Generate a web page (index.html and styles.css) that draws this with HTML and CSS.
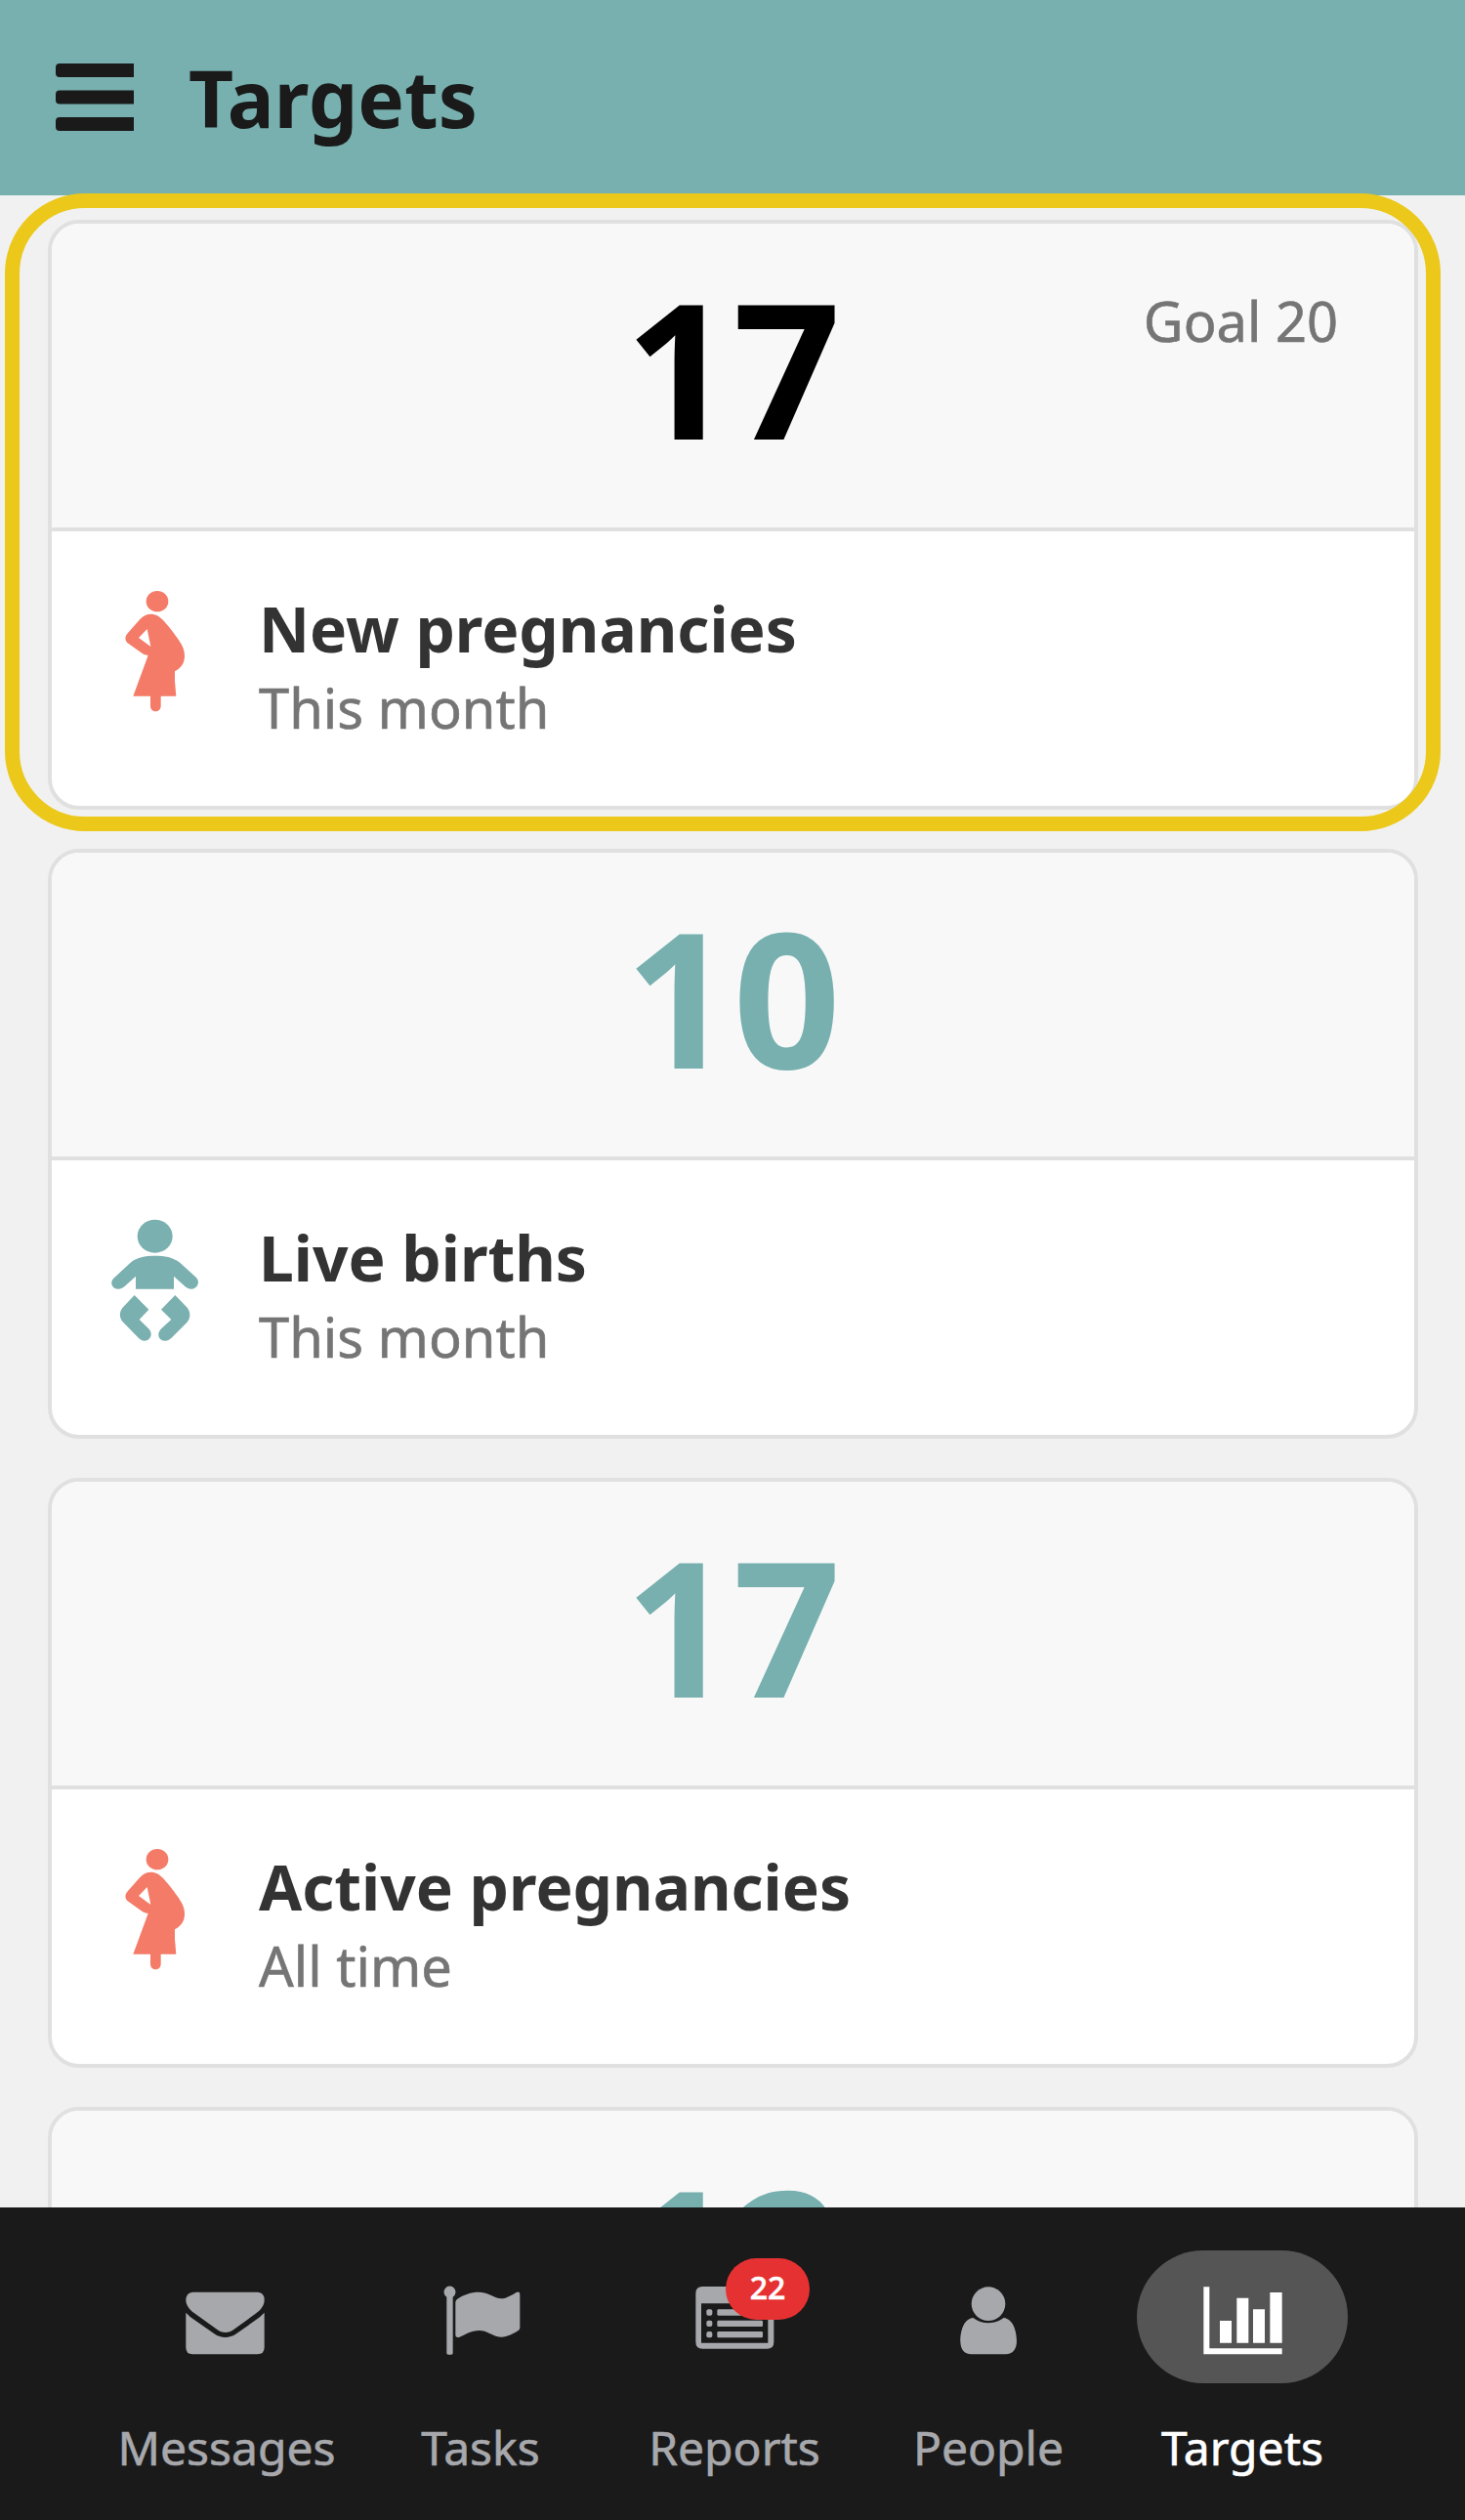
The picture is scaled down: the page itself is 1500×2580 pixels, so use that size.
FILE: index.html
```html
<!DOCTYPE html>
<html lang="en">
<head>
<meta charset="utf-8">
<title>Targets</title>
<link rel="stylesheet" href="styles.css">
</head>
<body>
<svg width="0" height="0" class="symbols" aria-hidden="true">
  <symbol id="pregnant" viewBox="15 36 390 390">
    <ellipse cx="213" cy="77" rx="34" ry="32"/>
    <path fill-rule="evenodd" d="M194 116C208 116 219 122 232 136C253 160 265 176 279 196C292 216 297 228 297 245C297 266 286 282 267 292V322L271 368H224V398C224 420 192 420 192 398V368H139L185 243C175 242 169 239 163 234L124 206C113 198 113 185 121 176L160 132C170 121 181 116 194 116ZM182 162L156 189L193 216Z"/>
  </symbol>
  <symbol id="baby" viewBox="15 48 390 390">
    <ellipse cx="206" cy="107" rx="54" ry="51"/>
    <path d="M206 167C236 167 260 171 281 187L333 234C347 250 334 269 318 269C310 269 305 267 299 262L264 230V269H147V230L112 262C106 267 101 269 93 269C76 269 65 250 79 236L130 189C149 171 176 167 206 167Z"/>
    <path d="M143 288L187 332L158 363L188 392C203 411 188 429 173 428C167 428 162 425 156 420L107 370C96 357 96 340 106 327Z"/>
    <path d="M268 288L225 332L256 363L224 392C208 410 221 430 239 428C245 428 250 425 256 420L304 372C316 359 316 340 305 326Z"/>
  </symbol>
</svg>

<div class="app">
  <header class="topbar">
    <svg class="menu" viewBox="0 0 80 70">
      <path d="M4 0H80V14H4Q0 14 0 10V4Q0 0 4 0ZM4 27.5H80V41.5H4Q0 41.5 0 37.5V31.5Q0 27.5 4 27.5ZM4 55H80V69H4Q0 69 0 65V59Q0 55 4 55Z"/>
    </svg>
    <h1 class="topbar-title">Targets</h1>
  </header>

  <main class="targets">
    <section class="card card-highlighted">
      <div class="card-head">
        <span class="count count-below">17</span>
        <span class="goal">Goal 20</span>
      </div>
      <div class="card-body">
        <svg class="card-icon coral"><use href="#pregnant"/></svg>
        <div>
          <h2 class="card-title">New pregnancies</h2>
          <p class="card-period">This month</p>
        </div>
      </div>
    </section>

    <section class="card">
      <div class="card-head"><span class="count">10</span></div>
      <div class="card-body">
        <svg class="card-icon teal"><use href="#baby"/></svg>
        <div>
          <h2 class="card-title">Live births</h2>
          <p class="card-period">This month</p>
        </div>
      </div>
    </section>

    <section class="card">
      <div class="card-head"><span class="count">17</span></div>
      <div class="card-body">
        <svg class="card-icon coral"><use href="#pregnant"/></svg>
        <div>
          <h2 class="card-title">Active pregnancies</h2>
          <p class="card-period">All time</p>
        </div>
      </div>
    </section>

    <section class="card">
      <div class="card-head"><span class="count">12</span></div>
    </section>
  </main>

  <nav class="tabs">
    <a class="tab">
      <span class="tab-pill">
        <svg class="tab-icon" viewBox="-108 -48 648 408">
          <path d="M112 80H312Q332 82 332 104C332 122 320 135 307 145L239 194C222 207 203 207 186 194L116 144C102 133 91 120 91 104Q92 82 112 80Z"/>
          <path d="M91 143L105 157L178 208C200 223 224 223 246 208L318 157L332 143V250Q332 271 311 271H112Q91 271 91 250Z"/>
        </svg>
      </span>
      <span class="tab-label">Messages</span>
    </a>
    <a class="tab">
      <span class="tab-pill">
        <svg class="tab-icon" viewBox="672 -48 648 408">
          <path d="M911 95V268Q911 272 906 272H897Q892 272 892 268V95A18 18 0 1 1 911 95Z"/>
          <path d="M919 112Q919 105 925 101C944 88 966 80 991 80C1020 80 1040 100 1060 100C1076 100 1096 86 1108 80Q1117 78 1117 87V190Q1117 196 1111 199C1096 208 1080 218 1060 218C1034 218 1020 198 992 198C968 198 946 212 930 219Q919 221 919 212Z"/>
        </svg>
      </span>
      <span class="tab-label">Tasks</span>
    </a>
    <a class="tab">
      <span class="tab-pill">
        <svg class="tab-icon" viewBox="-108 42 648 408">
          <path fill-rule="evenodd" d="M118 153H316Q337 153 337 174V323Q337 344 316 344H118Q97 344 97 323V174Q97 153 118 153ZM114 205V326H319V205Z"/>
          <rect x="130" y="223" width="18" height="19" rx="6"/>
          <rect x="130" y="257" width="18" height="19" rx="6"/>
          <rect x="130" y="291" width="18" height="19" rx="6"/>
          <rect x="163" y="223" width="140" height="19" rx="4"/>
          <rect x="163" y="257" width="140" height="19" rx="4"/>
          <rect x="163" y="291" width="140" height="19" rx="4"/>
        </svg>
        <span class="badge">22</span>
      </span>
      <span class="tab-label">Reports</span>
    </a>
    <a class="tab">
      <span class="tab-pill">
        <svg class="tab-icon" viewBox="672 42 648 408">
          <circle cx="996" cy="206" r="52"/>
          <path d="M949 249C976 270 1016 270 1043 249C1072 252 1083 290 1083 321C1083 345 1070 361 1050 361H943C922 361 910 345 910 321C910 290 920 252 949 249Z"/>
        </svg>
      </span>
      <span class="tab-label">People</span>
    </a>
    <a class="tab tab-active">
      <span class="tab-pill">
        <svg class="tab-icon" viewBox="102 72 648 408">
          <path d="M307 184H325V373H548V391H307ZM357 288H393V356H357ZM409 218H445V356H409ZM459 253H495V356H459ZM511 201H548V356H511Z"/>
        </svg>
      </span>
      <span class="tab-label">Targets</span>
    </a>
  </nav>
</div>
</body>
</html>
```
FILE: styles.css
```css
* {
  box-sizing: border-box;
}

body {
  margin: 0;
  font-family: "Noto Sans", "Open Sans", sans-serif;
  background: #f1f1f1;
}

.symbols {
  position: absolute;
}

.app {
  display: flex;
  flex-direction: column;
  height: 2580px;
  overflow: hidden;
}

.topbar {
  display: flex;
  flex: none;
  align-items: center;
  gap: 56px;
  height: 200px;
  padding-left: 57px;
  background: #77b0af;
}

.menu {
  width: 80px;
  height: 70px;
  fill: #1a1a1a;
}

.topbar-title {
  margin: 0;
  font-size: 80px;
  line-height: 199px;
  height: 200px;
  color: #1a1a1a;
}

.targets {
  display: flex;
  flex: 1;
  flex-direction: column;
  gap: 40px;
  min-height: 0;
  padding: 25px 48px 0 49px;
}

.card {
  position: relative;
  flex: none;
  height: 604px;
  border: 4px solid #e0e0e0;
  border-radius: 32px;
  background: #fff;
}

.card-highlighted::after {
  content: "";
  position: absolute;
  inset: -31px -27px -26px -48px;
  border: 15px solid #ebc81a;
  border-radius: 82px;
}

.card-head {
  display: grid;
  grid-template-columns: 1fr auto 1fr;
  align-items: start;
  height: 315px;
  padding: 47px 78px 0;
  border-bottom: 4px solid #e0e0e0;
  border-radius: 28px 28px 0 0;
  background: #f8f8f8;
}

.count {
  grid-column: 2;
  font-size: 193px;
  font-weight: 700;
  line-height: 200px;
  color: #77b0af;
}

.count-below {
  color: #000;
}

.goal {
  justify-self: end;
  margin-top: 22px;
  font-size: 56px;
  line-height: 61px;
  color: #757575;
  -webkit-text-stroke: 0.6px currentColor;
}

.card-body {
  display: flex;
  gap: 40px;
  padding: 58px 42px 0;
}

.card-icon {
  width: 130px;
  height: 130px;
}

.coral {
  fill: #f47b67;
}

.teal {
  fill: #7ab0af;
}

.card-title {
  margin: 0;
  font-size: 64px;
  line-height: 83px;
  color: #333;
}

.card-period {
  margin: 0;
  font-size: 56px;
  line-height: 78px;
  color: #757575;
  -webkit-text-stroke: 0.6px currentColor;
}

.tabs {
  position: relative;
  display: grid;
  flex: none;
  grid-template-columns: repeat(5, 260px);
  height: 320px;
  padding: 44px 0 0 102px;
  background: #1a1a1a;
}

.tab {
  display: flex;
  flex-direction: column;
  align-items: center;
  gap: 30px;
  color: #a7a8ac;
}

.tab-pill {
  position: relative;
  width: 216px;
  height: 136px;
  border-radius: 68px;
}

.tab-icon {
  display: block;
  width: 216px;
  height: 136px;
  fill: currentColor;
}

.tab-label {
  font-size: 48px;
  line-height: 72px;
  -webkit-text-stroke: 0.6px currentColor;
}

.tab-active {
  color: #fff;
}

.tab-active .tab-pill {
  background: #555;
}

.badge {
  position: absolute;
  top: 8px;
  left: 99px;
  width: 86px;
  height: 63px;
  border-radius: 32px;
  background: #e53131;
  color: #fff;
  font-size: 32px;
  font-weight: 500;
  line-height: 60px;
  text-align: center;
  -webkit-text-stroke: 0.6px currentColor;
}
```
